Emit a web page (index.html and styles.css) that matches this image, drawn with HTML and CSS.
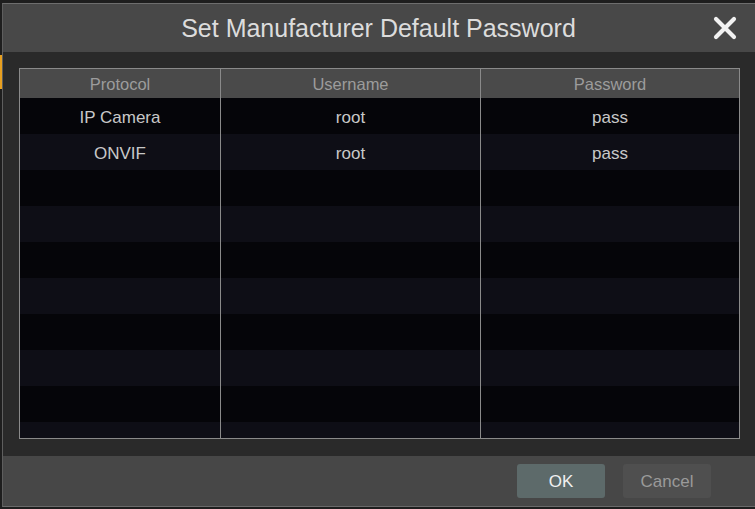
FILE: index.html
```html
<!DOCTYPE html>
<html>
<head>
<meta charset="utf-8">
<link rel="stylesheet" href="styles.css">
</head>
<body>
<div class="marker"></div>
<div class="dialog">
  <div class="titlebar">
    <div class="title">Set Manufacturer Default Password</div>
    <div class="close">
      <svg width="24" height="24" viewBox="0 0 24 24"><path d="M3 3 L21 21 M21 3 L3 21" stroke="#f2f2f2" stroke-width="4.2" stroke-linecap="round"/></svg>
    </div>
  </div>
  <div class="content">
    <div class="table">
      <div class="row head">
        <div class="cell c1">Protocol</div>
        <div class="cell c2">Username</div>
        <div class="cell c3">Password</div>
      </div>
      <div class="rows">
        <div class="row odd"><div class="cell c1">IP Camera</div><div class="cell c2">root</div><div class="cell c3">pass</div></div>
        <div class="row even"><div class="cell c1">ONVIF</div><div class="cell c2">root</div><div class="cell c3">pass</div></div>
        <div class="row odd"><div class="cell c1"></div><div class="cell c2"></div><div class="cell c3"></div></div>
        <div class="row even"><div class="cell c1"></div><div class="cell c2"></div><div class="cell c3"></div></div>
        <div class="row odd"><div class="cell c1"></div><div class="cell c2"></div><div class="cell c3"></div></div>
        <div class="row even"><div class="cell c1"></div><div class="cell c2"></div><div class="cell c3"></div></div>
        <div class="row odd"><div class="cell c1"></div><div class="cell c2"></div><div class="cell c3"></div></div>
        <div class="row even"><div class="cell c1"></div><div class="cell c2"></div><div class="cell c3"></div></div>
        <div class="row odd"><div class="cell c1"></div><div class="cell c2"></div><div class="cell c3"></div></div>
        <div class="row even"><div class="cell c1"></div><div class="cell c2"></div><div class="cell c3"></div></div>
      </div>
    </div>
  </div>
  <div class="footer">
    <button class="btn ok">OK</button>
    <button class="btn cancel">Cancel</button>
  </div>
</div>
</body>
</html>
```
FILE: styles.css
```css
html, body {
  margin: 0;
  padding: 0;
  background: #1e1e1e;
  width: 755px;
  height: 509px;
  overflow: hidden;
  font-family: "Liberation Sans", Arial, sans-serif;
}
body {
  padding: 3px 0 0 2px;
  box-sizing: border-box;
  position: relative;
}
.marker {
  position: absolute;
  left: 0;
  top: 55px;
  width: 2px;
  height: 34px;
  background: #e8a020;
}
.dialog {
  width: 753px;
  border-top: 1px solid #6e6e6e;
  border-left: 1px solid #5e5e5e;
  border-bottom: 1px solid #6a6a6a;
  display: flex;
  flex-direction: column;
}
.titlebar {
  height: 48px;
  background: #484848;
  display: flex;
  align-items: center;
  justify-content: center;
  position: relative;
}
.title {
  color: #dcdcdc;
  font-size: 25px;
  margin-right: 2px;
}
.close {
  position: absolute;
  right: 19px;
  top: 12px;
  width: 24px;
  height: 24px;
}
.content {
  background: #2a2a2a;
  padding: 16px 15px 17px 16px;
}
.table {
  border: 1px solid #8a8a8a;
  width: 719px;
}
.row {
  display: flex;
  height: 36px;
}
.row.head {
  height: 29px;
  background: #4a4a4a;
  color: #9a9a9a;
}
.rows {
  height: 340px;
  overflow: hidden;
}
.cell {
  display: flex;
  align-items: center;
  justify-content: center;
  font-size: 17px;
  color: #c8c8c8;
  padding-top: 3px;
  box-sizing: border-box;
}
.head .cell {
  color: #9c9c9c;
  font-size: 16.5px;
  padding-top: 1px;
}
.c1 { width: 201px; border-right: 1px solid #8a8a8a; }
.c2 { width: 260px; border-right: 1px solid #8a8a8a; }
.c3 { flex: 1; }
.odd { background: #050509; }
.even { background: #0e0e16; }
.footer {
  height: 50px;
  background: #474747;
  display: flex;
  align-items: flex-start;
  justify-content: flex-end;
  gap: 18px;
  padding: 8px 45px 0 0;
  box-sizing: border-box;
}
.btn {
  width: 88px;
  height: 34px;
  border: none;
  border-radius: 3px;
  font-family: "Liberation Sans", Arial, sans-serif;
  font-size: 17px;
  padding: 2px 0 0;
}
.ok {
  background: #5d6a6a;
  color: #f0f0f0;
}
.cancel {
  background: #4f4f4f;
  color: #9a9a9a;
}
```
